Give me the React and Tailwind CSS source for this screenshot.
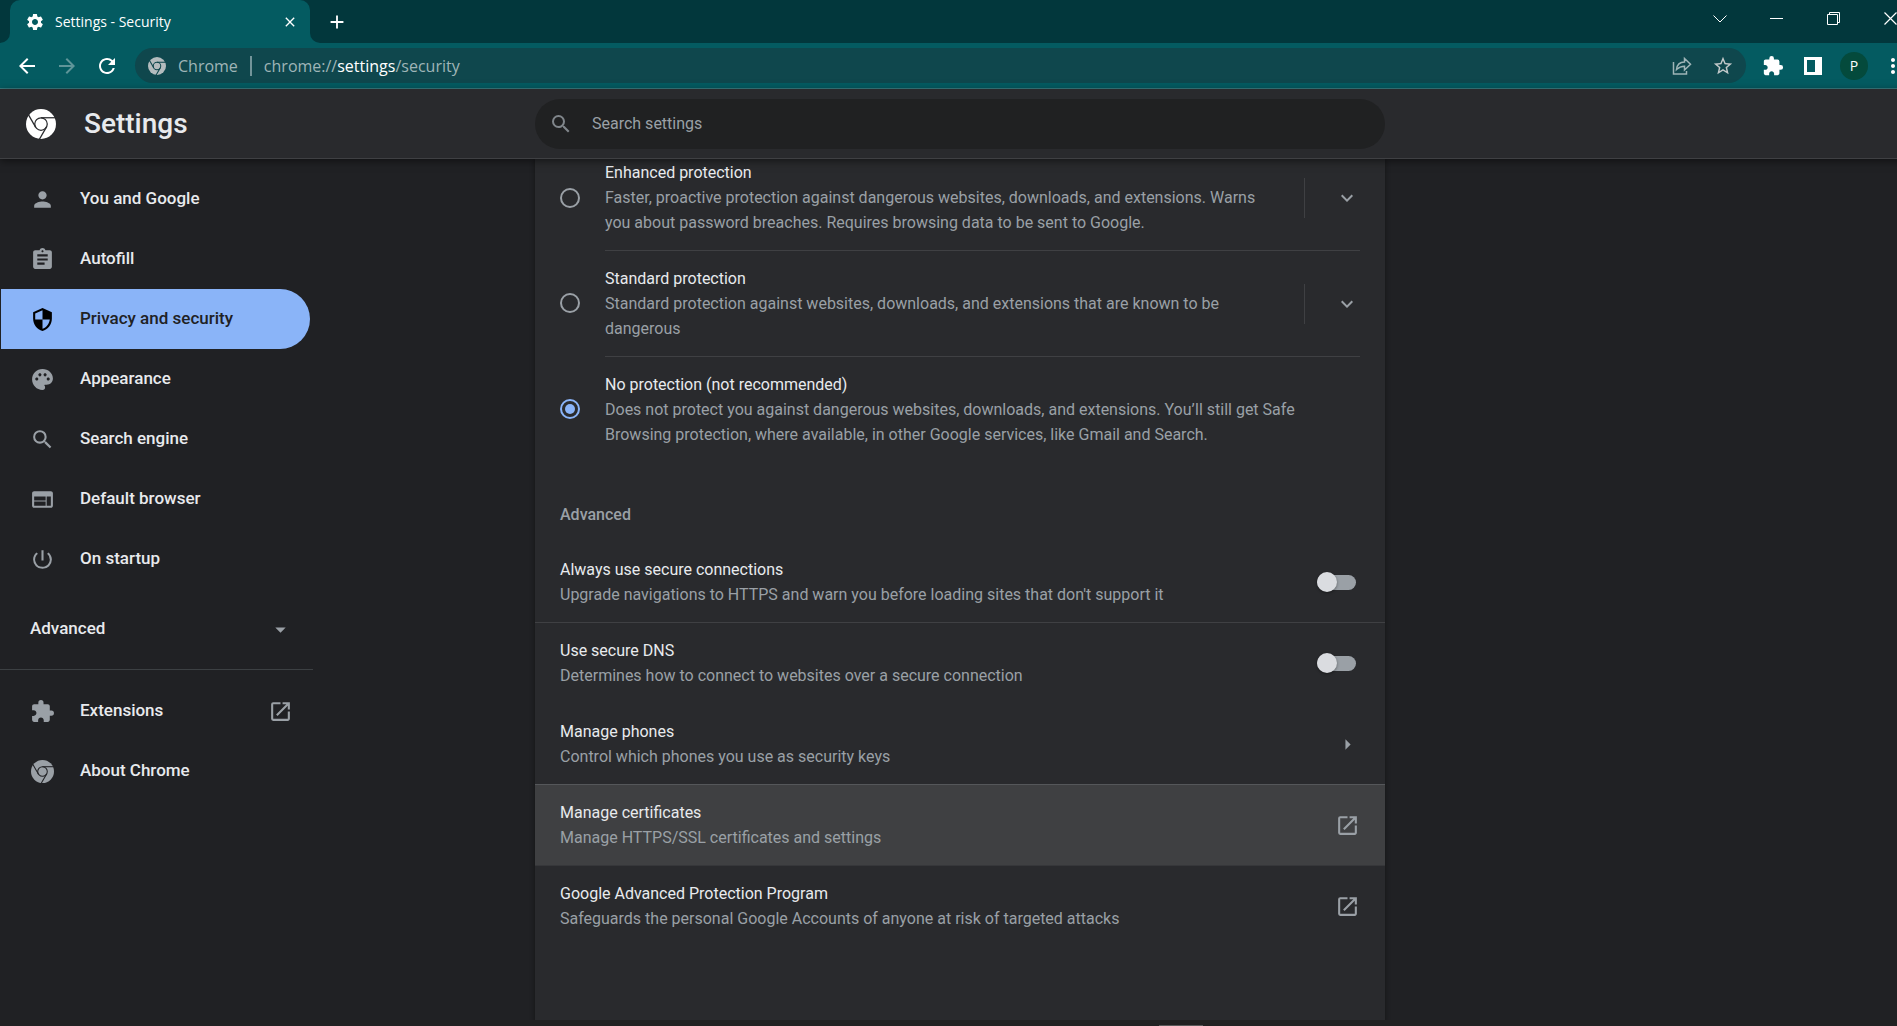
import { useId } from "react";
import {
  MdAdd,
  MdArrowBack,
  MdArrowDropDown,
  MdArrowForward,
  MdArrowRight,
  MdAssignment,
  MdClose,
  MdExpandMore,
  MdExtension,
  MdMoreVert,
  MdOpenInNew,
  MdPalette,
  MdPerson,
  MdPowerSettingsNew,
  MdRefresh,
  MdSearch,
  MdSecurity,
  MdSettings,
  MdStarBorder,
  MdWeb,
} from "react-icons/md";

function ChromeLogo({ className, line = 1 }) {
  const id = useId();
  return (
    <svg viewBox="0 0 24 24" className={className} aria-hidden="true">
      <mask id={id}>
        <rect width="24" height="24" fill="white" />
        <g fill="none" stroke="black" strokeWidth={line}>
          <circle cx="12" cy="12" r="5" />
          <path d="M12 7h12" />
          <path d="M12 7h12" transform="rotate(120 12 12)" />
          <path d="M12 7h12" transform="rotate(240 12 12)" />
        </g>
      </mask>
      <circle cx="12" cy="12" r="12" fill="currentColor" mask={`url(#${id})`} />
    </svg>
  );
}

function TabStrip() {
  return (
    <div className="flex h-[43px] items-stretch bg-[#02373c] text-white">
      <div className="flex w-[10px] bg-[#045b61]">
        <div className="w-full rounded-br-[10px] bg-[#02373c]" />
      </div>
      <div className="flex w-[300px] items-center rounded-t-[10px] bg-[#045b61] pr-3 pl-[15px]">
        <MdSettings className="mr-2.5 size-5 shrink-0" />
        <span className="grow text-sm">Settings - Security</span>
        <button type="button" aria-label="Close tab">
          <MdClose className="size-4" />
        </button>
      </div>
      <div className="flex w-[10px] bg-[#045b61]">
        <div className="w-full rounded-bl-[10px] bg-[#02373c]" />
      </div>
      <button type="button" aria-label="New tab" className="ml-1.5">
        <MdAdd className="size-[22px]" />
      </button>
      <div className="mr-px ml-auto flex pb-1.5">
        <button type="button" aria-label="Search tabs" className="flex w-[57px] items-center justify-center">
          <svg viewBox="0 0 14 8" className="h-2 w-3.5" fill="none" stroke="currentColor">
            <path d="M0.5 0.5 7 7l6.500-6.500" />
          </svg>
        </button>
        <button type="button" aria-label="Minimize" className="flex w-[57px] items-center justify-center">
          <span className="h-px w-[13px] bg-white" />
        </button>
        <button type="button" aria-label="Restore" className="flex w-[57px] items-center justify-center">
          <svg viewBox="0 0 13 13" className="size-[13px]" fill="none" stroke="currentColor">
            <path d="M0.500 2.500h10v10h-10zM2.500 2.500v-2h10v10h-2" />
          </svg>
        </button>
        <button type="button" aria-label="Close" className="flex w-[57px] items-center justify-center">
          <svg viewBox="0 0 13 13" className="size-[13px]" fill="none" stroke="currentColor" strokeWidth="1.200">
            <path d="M0.500 0.500l12 12M12.500 0.500l-12 12" />
          </svg>
        </button>
      </div>
    </div>
  );
}

function Toolbar() {
  return (
    <div className="flex h-[46px] items-center border-b border-[#3a7d82] bg-[#045b61] pr-[15px] pl-[15px] text-white">
      <button type="button" aria-label="Back" className="mr-4">
        <MdArrowBack className="size-6" />
      </button>
      <button type="button" aria-label="Forward" className="mr-4 text-[#5f9599]">
        <MdArrowForward className="size-6" />
      </button>
      <button type="button" aria-label="Reload" className="mr-4">
        <MdRefresh className="size-6" />
      </button>
      <div className="flex h-[35px] grow items-center rounded-full bg-[#0f474d] pr-3 pl-[13px] text-[#9fb5b7]">
        <ChromeLogo className="mr-3 size-[18px] text-[#b4bcbe]" line={1.4} />
        <span>Chrome</span>
        <span className="mx-3 h-5 w-0.5 bg-[#73959a]" />
        <span className="grow">
          chrome://<span className="text-white">settings</span>/security
        </span>
        <button type="button" aria-label="Share this page" className="mr-5">
          <svg viewBox="0 0 20 20" className="size-5" fill="none" stroke="currentColor" strokeWidth="1.500">
            <path d="M1.500 6v12h13v-3" />
            <path d="M12.500 2.500v3.500C8 6 5 9 4.500 13.500 7 11 9.500 10.200 12.500 10.200V14l6-5.750z" />
          </svg>
        </button>
        <button type="button" aria-label="Bookmark this tab" className="text-[#c3c9ca]">
          <MdStarBorder className="size-[22px]" />
        </button>
      </div>
      <button type="button" aria-label="Extensions" className="mr-5 ml-4">
        <MdExtension className="size-[22px]" />
      </button>
      <button type="button" aria-label="Side panel" className="mr-[18px]">
        <svg viewBox="0 0 18 18" className="size-[18px]">
          <path fill="currentColor" fillRule="evenodd" d="M0 0h18v18H0zM3 3v12h8V3z" />
        </svg>
      </button>
      <button
        type="button"
        aria-label="Profile"
        className="mr-[13px] flex size-7 items-center justify-center rounded-full bg-[#044a3c] text-sm"
      >
        P
      </button>
      <button type="button" aria-label="Menu">
        <MdMoreVert className="size-6" />
      </button>
    </div>
  );
}

function SettingsHeader() {
  return (
    <header className="z-10 flex h-[70px] items-center border-b border-[#3f4043] bg-[#292a2d] shadow-[0_2px_8px_rgba(0,0,0,0.5)]">
      <div className="flex flex-1 basis-0 items-center">
        <ChromeLogo className="ml-[26px] size-[30px] text-white" line={1} />
        <h1 className="ml-7 text-[28px] font-medium text-[#e8eaed]">Settings</h1>
      </div>
      <label className="flex h-[50px] w-[850px] items-center rounded-full bg-[#202122] pl-3.5 text-[#9aa0a6]">
        <MdSearch className="size-6 text-[#80868b]" />
        <input
          type="search"
          aria-label="Search settings"
          placeholder="Search settings"
          className="ml-[19px] grow bg-transparent text-base outline-none placeholder:text-[#9aa0a6]"
        />
      </label>
      <div className="flex-1 basis-0" />
    </header>
  );
}

const navItems = [
  { icon: MdPerson, label: "You and Google" },
  { icon: MdAssignment, label: "Autofill" },
  { icon: MdSecurity, label: "Privacy and security", active: true },
  { icon: MdPalette, label: "Appearance" },
  { icon: MdSearch, label: "Search engine" },
  { icon: MdWeb, label: "Default browser" },
  { icon: MdPowerSettingsNew, label: "On startup" },
];

function Sidebar() {
  return (
    <nav className="w-[313px] pt-2.5 text-[17px] font-medium text-[#e8eaed]">
      {navItems.map(({ icon: Icon, label, active }) => (
        <a
          key={label}
          href="#"
          className={
            active
              ? "mr-[3px] ml-px flex h-[60px] items-center gap-[25px] rounded-r-full bg-[#8ab4f8] pl-[29px] text-[#202124]"
              : "flex h-[60px] items-center gap-[25px] pl-[30px]"
          }
        >
          <Icon className={active ? "size-[25px] text-black" : "size-[25px] text-[#9aa0a6]"} />
          {label}
        </a>
      ))}
      <button type="button" className="my-2.5 flex h-[60px] w-full items-center justify-between pr-5 pl-[30px]">
        Advanced
        <MdArrowDropDown className="size-[25px] text-[#9aa0a6]" />
      </button>
      <div className="mb-[11px] border-t border-[#3c4043]" />
      <a href="#" className="flex h-[60px] items-center gap-[25px] pr-5 pl-[30px]">
        <MdExtension className="size-[25px] text-[#9aa0a6]" />
        <span className="grow">Extensions</span>
        <MdOpenInNew className="size-[25px] text-[#9aa0a6]" />
      </a>
      <a href="#" className="flex h-[60px] items-center gap-[25px] pl-[30px]">
        <span className="flex size-[25px] items-center justify-center">
          <ChromeLogo className="size-[23px] text-[#9aa0a6]" line={1.1} />
        </span>
        About Chrome
      </a>
    </nav>
  );
}

function ProtectionOption({ id, title, description, first, expandable, checked }) {
  return (
    <div className={first ? "flex items-center px-[25px] pb-[15px]" : "flex items-center px-[25px]"}>
      <input
        type="radio"
        name="protection"
        id={id}
        defaultChecked={checked}
        className="mr-[25px] flex size-5 shrink-0 appearance-none items-center justify-center rounded-full border-2 border-[#9aa0a6] checked:border-[#8ab4f8] checked:before:size-2.5 checked:before:rounded-full checked:before:bg-[#8ab4f8]"
      />
      <div
        className={
          first
            ? "flex grow items-center"
            : "flex grow items-center border-t border-[#3f4043] py-[15px]"
        }
      >
        <label htmlFor={id} className="flex-1 pr-7">
          <span className="block text-[#e8eaed]">{title}</span>
          <span className="block">{description}</span>
        </label>
        {expandable && (
          <>
            <span className="h-10 w-px bg-[#3f4043]" />
            <button type="button" aria-label={`More about ${title}`} className="flex w-[55px] justify-center pl-7">
              <MdExpandMore className="size-6 text-[#9aa0a6]" />
            </button>
          </>
        )}
      </div>
    </div>
  );
}

function RowText({ title, description }) {
  return (
    <span className="grow text-left">
      <span className="block text-[#e8eaed]">{title}</span>
      <span className="block">{description}</span>
    </span>
  );
}

function ToggleRow({ title, description, divided }) {
  return (
    <label
      className={
        divided
          ? "flex items-center border-t border-[#3f4043] py-[15px] pr-[29px] pl-[25px]"
          : "flex items-center py-[15px] pr-[29px] pl-[25px]"
      }
    >
      <RowText title={title} description={description} />
      <input
        type="checkbox"
        role="switch"
        className="flex h-[15px] w-[39px] appearance-none items-center rounded-full bg-[#9aa0a6] before:size-5 before:rounded-full before:bg-[#dadce0] before:shadow-[0_1px_3px_rgba(0,0,0,0.4)] checked:justify-end checked:before:bg-[#8ab4f8]"
      />
    </label>
  );
}

function SecurityPanel() {
  return (
    <main className="w-[850px] bg-[#292a2d] pt-px leading-[25px] text-[#9aa0a6] shadow-[0_1px_4px_1px_rgba(0,0,0,0.3)]">
      <ProtectionOption
        id="enhanced"
        first
        expandable
        title="Enhanced protection"
        description="Faster, proactive protection against dangerous websites, downloads, and extensions. Warns you about password breaches. Requires browsing data to be sent to Google."
      />
      <ProtectionOption
        id="standard"
        expandable
        title="Standard protection"
        description="Standard protection against websites, downloads, and extensions that are known to be dangerous"
      />
      <ProtectionOption
        id="none"
        checked
        title="No protection (not recommended)"
        description="Does not protect you against dangerous websites, downloads, and extensions. You’ll still get Safe Browsing protection, where available, in other Google services, like Gmail and Search."
      />
      <h2 className="px-[25px] pt-10 pb-[15px] font-medium">Advanced</h2>
      <ToggleRow
        title="Always use secure connections"
        description="Upgrade navigations to HTTPS and warn you before loading sites that don't support it"
      />
      <ToggleRow
        divided
        title="Use secure DNS"
        description="Determines how to connect to websites over a secure connection"
      />
      <button type="button" className="flex w-full items-center border-t border-transparent px-[25px] py-[15px]">
        <RowText title="Manage phones" description="Control which phones you use as security keys" />
        <MdArrowRight className="size-[25px]" />
      </button>
      <button
        type="button"
        className="flex w-full items-center border-t border-[#55575a] bg-[#3f4042] px-[25px] py-[15px]"
      >
        <RowText title="Manage certificates" description="Manage HTTPS/SSL certificates and settings" />
        <MdOpenInNew className="size-[25px]" />
      </button>
      <button type="button" className="flex w-full items-center border-t border-[#36373a] px-[25px] py-[15px]">
        <RowText
          title="Google Advanced Protection Program"
          description="Safeguards the personal Google Accounts of anyone at risk of targeted attacks"
        />
        <MdOpenInNew className="size-[25px]" />
      </button>
    </main>
  );
}

export default function App() {
  return (
    <div className="overflow-hidden bg-[#202124] font-['Roboto',sans-serif]">
      {/* The window is wider than the viewport and runs off its right edge. */}
      <div className="-mr-[23px] flex min-h-screen flex-col">
        <div className="font-['Open_Sans',sans-serif]">
          <TabStrip />
          <Toolbar />
        </div>
        <SettingsHeader />
        <div className="flex grow">
          <div className="flex-1 basis-0">
            <Sidebar />
          </div>
          <SecurityPanel />
          <div className="flex-1 basis-0" />
        </div>
        <div className="z-10 flex h-1.5 items-end bg-[#212121]">
          <div className="ml-[1159px] w-11 border-b border-[#5a5a5a]" />
        </div>
      </div>
    </div>
  );
}
